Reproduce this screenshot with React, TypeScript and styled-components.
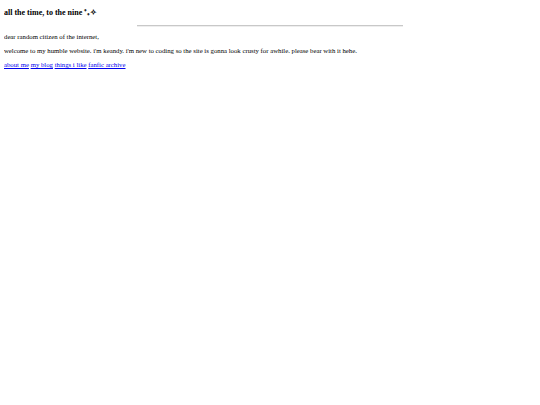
import { createGlobalStyle } from 'styled-components';
import styled from 'styled-components';

const GlobalStyle = createGlobalStyle`
  body {
    margin: 4px;
    background: #ffffff;
    font-family: "Liberation Serif", "Times New Roman", serif;
    color: #000000;
  }
`;

const Title = styled.h3`
  font-size: 8px;
  font-weight: bold;
  line-height: 9px;
  margin: 4px 0 0;
`;

const Rule = styled.hr`
  width: 50%;
  margin: 8px auto 0;
  border: none;
  border-top: 1px solid #c8c8c8;
  border-bottom: 1px solid #eeeeee;
`;

const Text = styled.p`
  font-size: 6.75px;
  line-height: 8px;
  margin: 6px 0;
`;

const Nav = styled(Text)``;

const NavLink = styled.a`
  color: #0000ee;
  text-decoration: underline;
`;

const links = ['about me', 'my blog', 'things i like', 'fanfic archive'];

export default function App() {
  return (
    <>
      <GlobalStyle />
      <Title>all the time, to the nine ⁺₊✧</Title>
      <Rule />
      <Text>dear random citizen of the internet,</Text>
      <Text>
        welcome to my humble website. i'm keandy. i'm new to coding so the site is gonna look
        crusty for awhile. please bear with it hehe.
      </Text>
      <Nav>
        {links.map((l, i) => (
          <span key={l}>
            <NavLink href="#">{l}</NavLink>
            {i < links.length - 1 ? ' ' : ''}
          </span>
        ))}
      </Nav>
    </>
  );
}
